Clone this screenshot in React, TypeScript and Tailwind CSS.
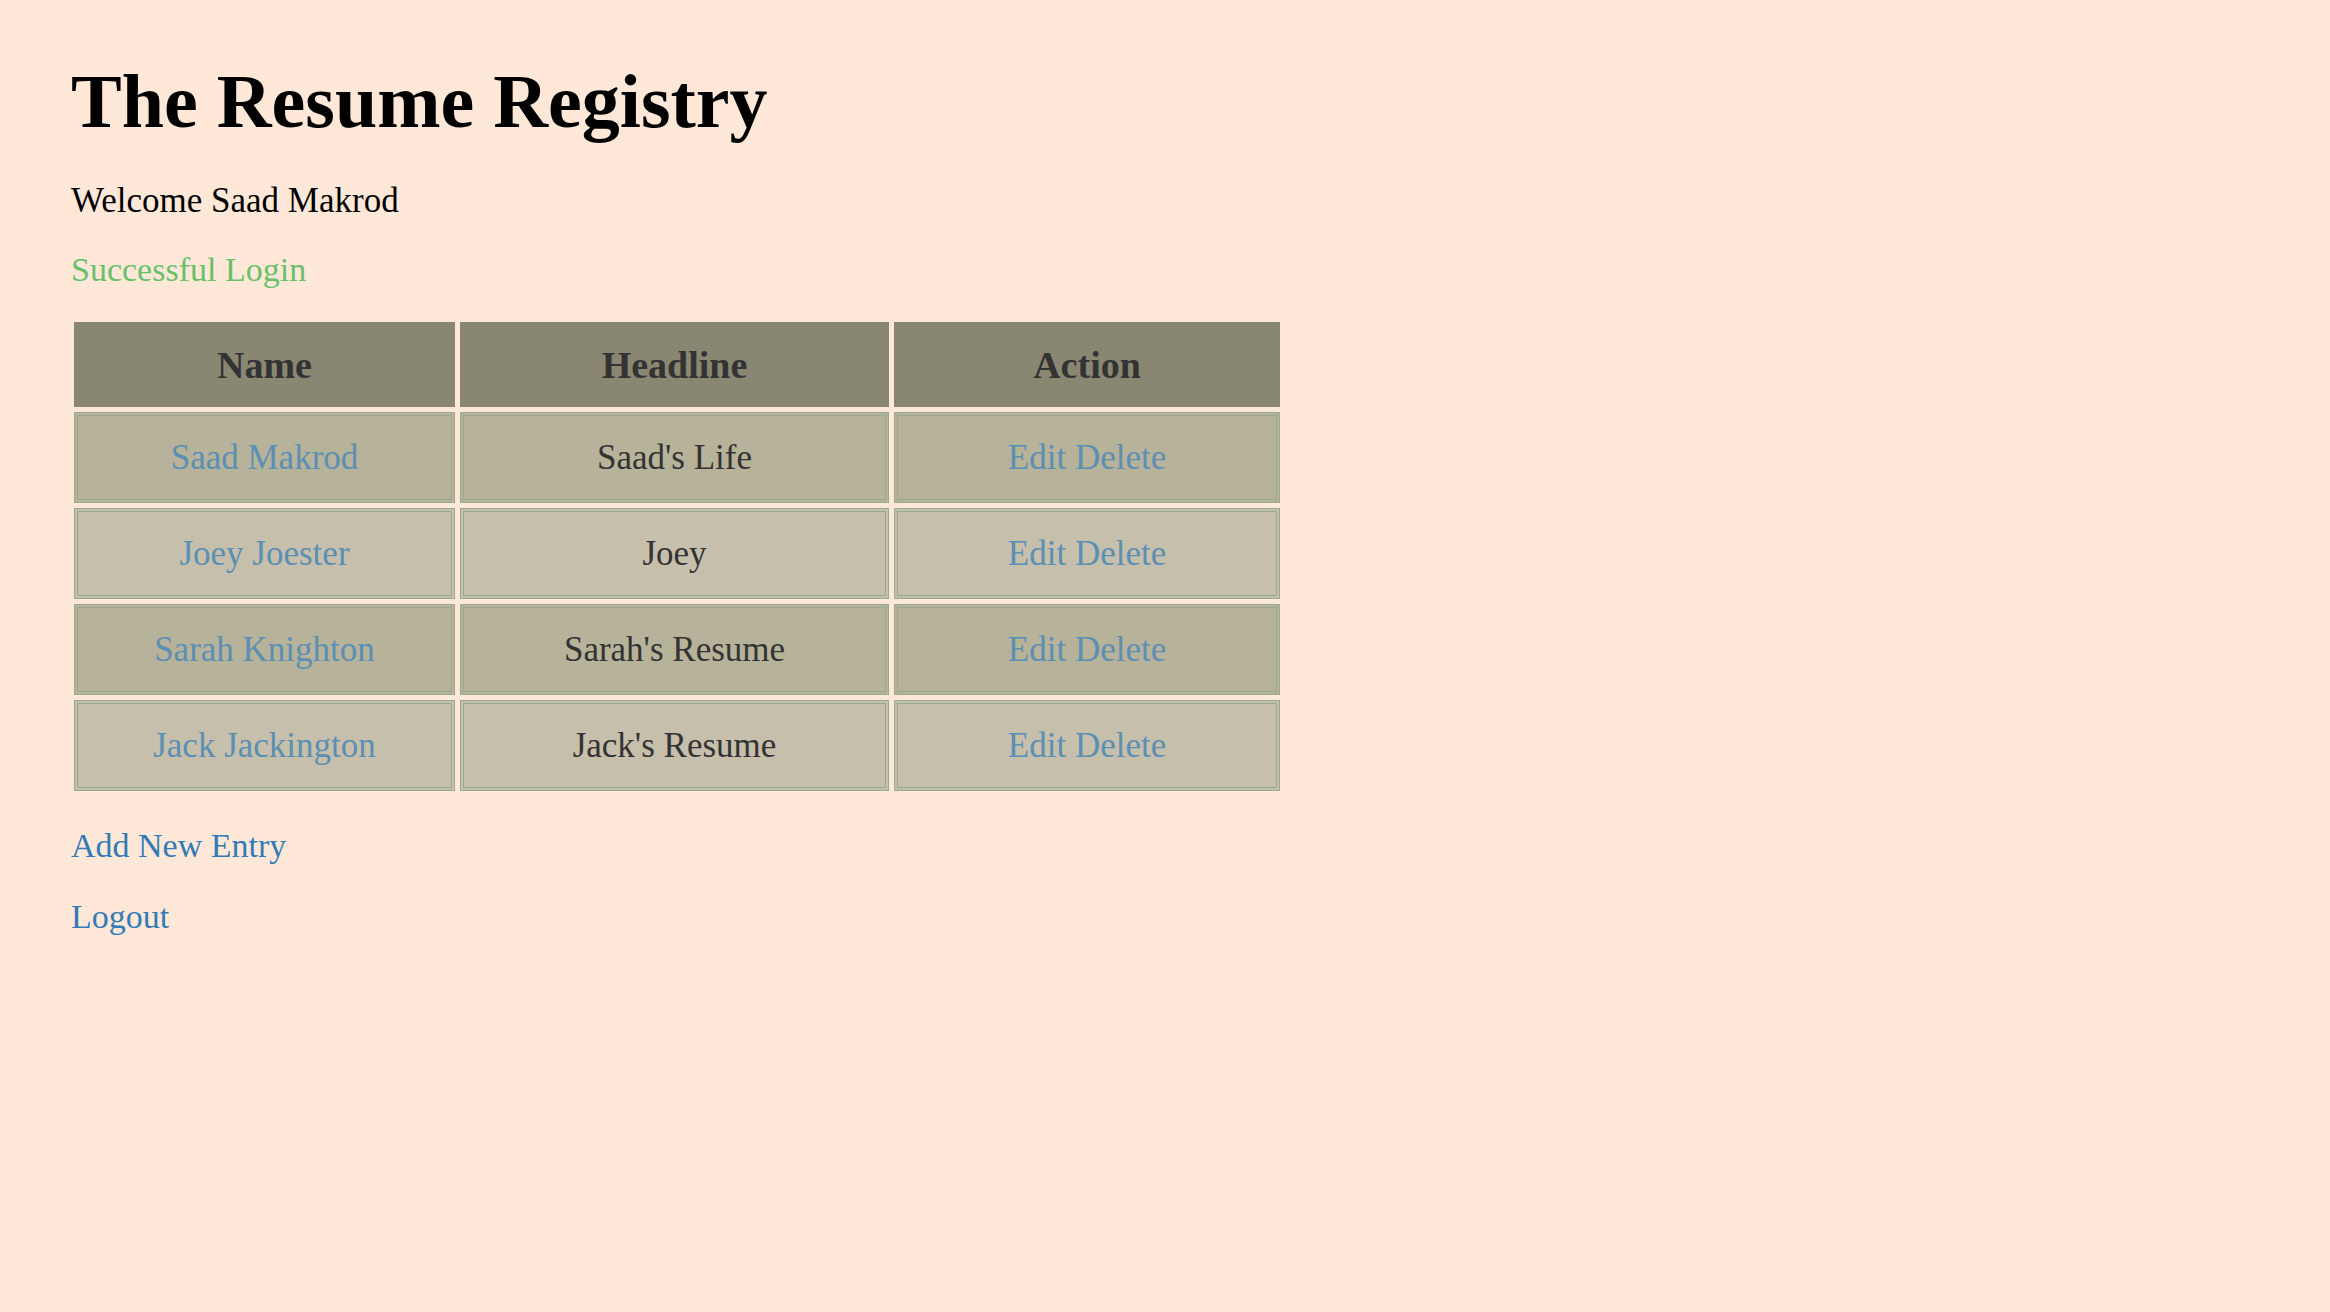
import React from "react";

const rows = [
  { name: "Saad Makrod", headline: "Saad's Life", bg: "bg-[#b7b29a]" },
  { name: "Joey Joester", headline: "Joey", bg: "bg-[#c5bfab]" },
  { name: "Sarah Knighton", headline: "Sarah's Resume", bg: "bg-[#b7b29a]" },
  { name: "Jack Jackington", headline: "Jack's Resume", bg: "bg-[#c5bfab]" },
];

const cols = ["w-[381px]", "w-[429px]", "w-[386px]"];

export default function App() {
  return (
    <div className="min-h-screen w-full bg-[#ffe8d8] font-['Liberation_Serif',serif] text-black">
      <div className="flex flex-col items-start pl-[71px] pt-[63px]">
        <h1 className="text-[76px] font-bold leading-[76px] text-black">The Resume Registry</h1>
        <p className="mt-[42px] text-[35px] leading-[40px] text-black">Welcome Saad Makrod</p>
        <p className="mt-[29px] text-[34px] leading-[40px] text-[#6abf69]">Successful Login</p>

        <div className="ml-[3px] mt-[32px] flex flex-col gap-[5px]">
          <div className="flex gap-[5px]">
            {["Name", "Headline", "Action"].map((h, i) => (
              <div
                key={h}
                className={`${cols[i]} flex h-[85px] items-center justify-center bg-[#898772] text-[38px] font-bold leading-[38px] text-[#333333]`}
              >
                {h}
              </div>
            ))}
          </div>
          {rows.map((r) => (
            <div key={r.name} className="flex gap-[5px]">
              <div
                className={`${cols[0]} ${r.bg} flex h-[91px] items-center justify-center border-[4px] border-double border-[#98aa8c] text-[35px] leading-[35px] text-[#5b8fb3]`}
              >
                <a href="#">{r.name}</a>
              </div>
              <div
                className={`${cols[1]} ${r.bg} flex h-[91px] items-center justify-center border-[4px] border-double border-[#98aa8c] text-[35px] leading-[35px] text-[#333333]`}
              >
                {r.headline}
              </div>
              <div
                className={`${cols[2]} ${r.bg} flex h-[91px] items-center justify-center border-[4px] border-double border-[#98aa8c] text-[35px] leading-[35px] text-[#5b8fb3]`}
              >
                <a href="#">Edit</a>
                <span>&nbsp;</span>
                <a href="#">Delete</a>
              </div>
            </div>
          ))}
        </div>

        <a href="#" className="mt-[35px] text-[34px] leading-[40px] text-[#337ab7]">
          Add New Entry
        </a>
        <a href="#" className="mt-[31px] text-[34px] leading-[40px] text-[#337ab7]">
          Logout
        </a>
      </div>
    </div>
  );
}
